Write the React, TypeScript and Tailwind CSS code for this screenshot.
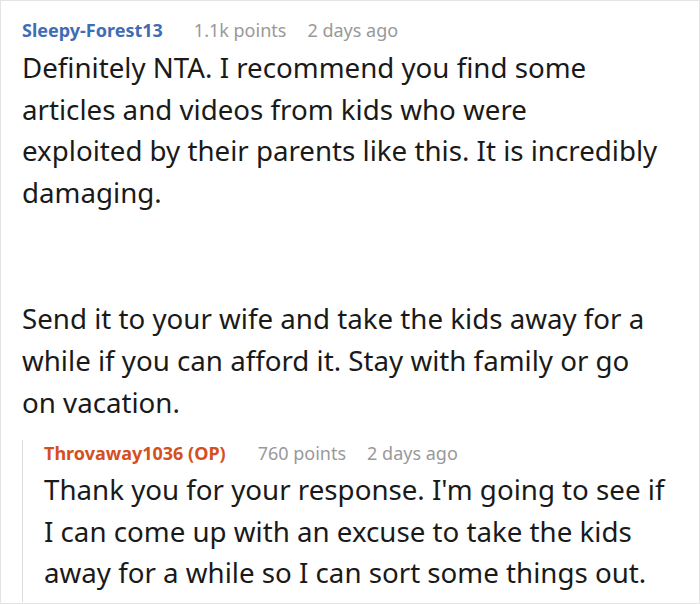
export default function App() {
  const font = { fontFamily: '"Noto Sans", "Open Sans", sans-serif' };
  return (
    <div className="w-[700px] h-[604px] bg-white border border-[#e4e4e4] overflow-hidden" style={font}>
      <div className="pl-[21px] pr-[20px] pt-[16px]">
        <div className="flex items-center text-[18px] leading-[26px]">
          <span className="font-bold text-[#3f6db5]">Sleepy-Forest13</span>
          <span className="ml-[31px] text-[#999]">1.1k points</span>
          <span className="ml-[21px] text-[#999]">2 days ago</span>
        </div>
        <div className="w-[648px] text-[27.7px] leading-[41.6px] text-[#1a1a1a] mt-[4px]">
          <p>Definitely NTA. I recommend you find some articles and videos from kids who were<br />exploited by their parents like this. It is incredibly damaging.</p>
          <p className="mt-[85px]">Send it to your wife and take the kids away for a while if you can afford it. Stay with family or go on vacation.</p>
        </div>
        <div className="mt-[17px] border-l border-[#dcdcdc] pl-[21px] pb-[8px]">
          <div className="flex items-center text-[18px] leading-[26px]">
            <span className="font-bold text-[#d4501e]">Throvaway1036 (OP)</span>
            <span className="ml-[32px] text-[#999]">760 points</span>
            <span className="ml-[21px] text-[#999]">2 days ago</span>
          </div>
          <p className="text-[27.7px] leading-[41.6px] text-[#1a1a1a] mt-[3px]">Thank you for your response. I'm going to see if I can come up with an excuse to take the kids away for a while so I can sort some things out.</p>
        </div>
      </div>
    </div>
  );
}
